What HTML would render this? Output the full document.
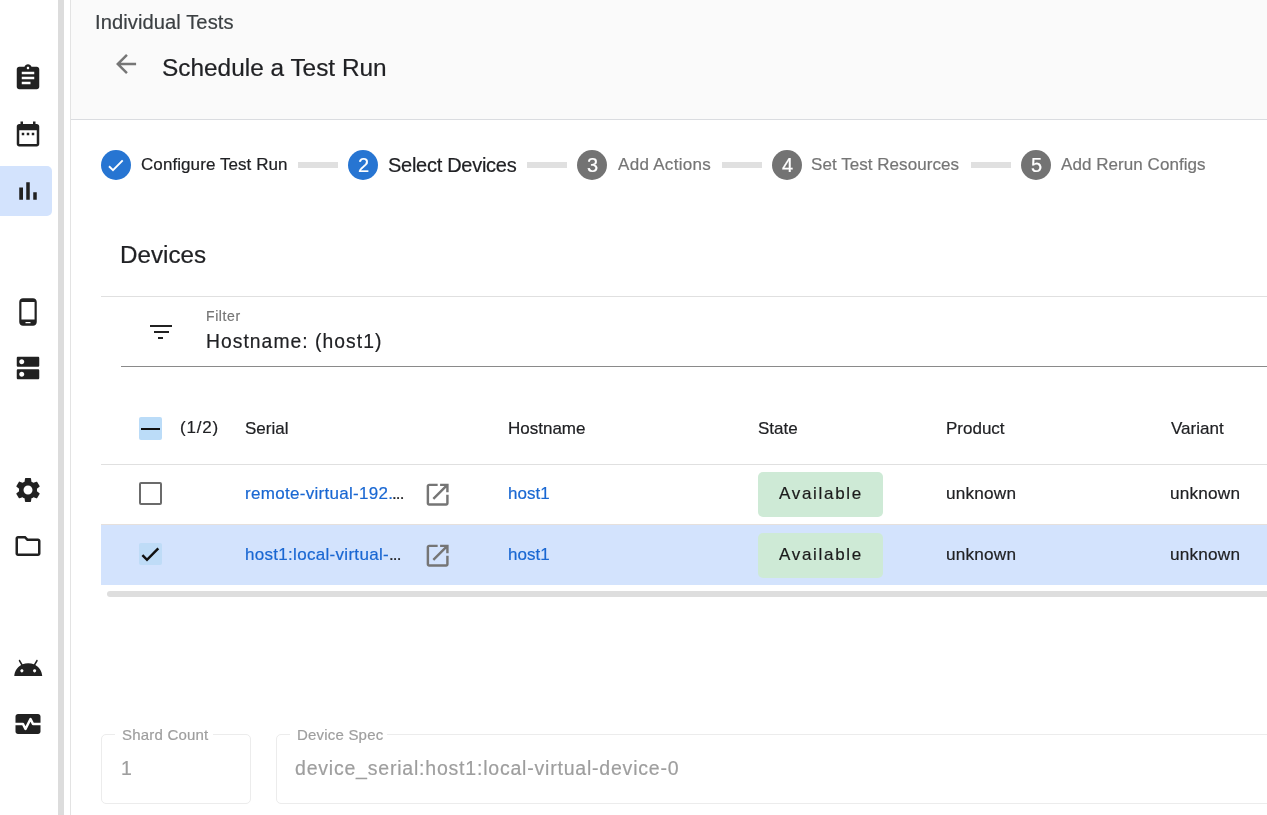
<!DOCTYPE html>
<html><head><meta charset="utf-8">
<style>
html,body{margin:0;padding:0;width:1267px;height:815px;overflow:hidden;background:#fff;font-family:"Liberation Sans",sans-serif;}
.a{position:absolute;}
.t{position:absolute;white-space:nowrap;line-height:1;will-change:transform;-webkit-text-stroke:0.2px currentColor;}
svg{position:absolute;display:block;overflow:visible;}
</style></head>
<body>
<div class="a" style="left:58px;top:0px;width:6px;height:815px;background:#dcdcdc;"></div>
<div class="a" style="left:70px;top:0px;width:1px;height:815px;background:#e3e3e3;"></div>
<div class="a" style="left:0px;top:166px;width:52px;height:50px;background:#d3e3fd;border-radius:0 5px 5px 0"></div>
<svg style="left:13.33px;top:63.3px" width="30" height="30" viewBox="0 0 24 24"><path fill="#212121" d="M19 3h-4.18C14.4 1.84 13.3 1 12 1c-1.3 0-2.4.84-2.82 2H5c-1.1 0-2 .9-2 2v14c0 1.1.9 2 2 2h14c1.1 0 2-.9 2-2V5c0-1.1-.9-2-2-2zm-7 0c.55 0 1 .45 1 1s-.45 1-1 1-1-.45-1-1 .45-1 1-1zm2 14H7v-2h7v2zm3-4H7v-2h10v2zm0-4H7V7h10v2z"/></svg>
<svg style="left:13.0px;top:118.5px" width="30" height="30" viewBox="0 0 24 24"><path fill="#212121" d="M9 11H7v2h2v-2zm4 0h-2v2h2v-2zm4 0h-2v2h2v-2zm2-7h-1V2h-2v2H8V2H6v2H5c-1.11 0-1.99.9-1.99 2L3 20c0 1.1.89 2 2 2h14c1.1 0 2-.9 2-2V6c0-1.1-.9-2-2-2zm0 16H5V9h14v11z"/></svg>
<svg style="left:12.85px;top:175.75px" width="30" height="30" viewBox="0 0 24 24"><path fill="#212121" d="M5 9.2h3V19H5zM10.6 5h2.8v14h-2.8zm5.6 8H19v6h-2.8z"/></svg>
<svg style="left:12.85px;top:297.15px" width="30" height="30" viewBox="0 0 24 24"><path fill="#212121" d="M16 1H8C6.34 1 5 2.34 5 4v16c0 1.66 1.34 3 3 3h8c1.66 0 3-1.34 3-3V4c0-1.66-1.34-3-3-3zm-2 20h-4v-1h4v1zm3.25-3H6.75V4h10.5v14z"/></svg>
<svg style="left:13.25px;top:352.85px" width="30" height="30" viewBox="0 0 24 24"><path fill="#212121" d="M20 13H4c-.55 0-1 .45-1 1v6c0 .55.45 1 1 1h16c.55 0 1-.45 1-1v-6c0-.55-.45-1-1-1zM7 19c-1.1 0-2-.9-2-2s.9-2 2-2 2 .9 2 2-.9 2-2 2zM20 3H4c-.55 0-1 .45-1 1v6c0 .55.45 1 1 1h16c.55 0 1-.45 1-1V4c0-.55-.45-1-1-1zM7 9c-1.1 0-2-.9-2-2s.9-2 2-2 2 .9 2 2-.9 2-2 2z"/></svg>
<svg style="left:12.55px;top:474.9px" width="30" height="30" viewBox="0 0 24 24"><path fill="#212121" d="M19.14 12.94c.04-.3.06-.61.06-.94 0-.32-.02-.64-.07-.94l2.03-1.58c.18-.14.23-.41.12-.61l-1.92-3.32c-.12-.22-.37-.29-.59-.22l-2.39.96c-.5-.38-1.03-.7-1.62-.94l-.36-2.54c-.04-.24-.24-.41-.48-.41h-3.84c-.24 0-.43.17-.47.41l-.36 2.54c-.59.24-1.13.57-1.62.94l-2.39-.96c-.22-.08-.47 0-.59.22L2.74 8.87c-.12.21-.08.47.12.61l2.03 1.58c-.05.3-.09.63-.09.94s.02.64.07.94l-2.03 1.58c-.18.14-.23.41-.12.61l1.92 3.32c.12.22.37.29.59.22l2.39-.96c.5.38 1.03.7 1.62.94l.36 2.54c.05.24.24.41.48.41h3.84c.24 0 .44-.17.47-.41l.36-2.54c.59-.24 1.13-.56 1.62-.94l2.39.96c.22.08.47 0 .59-.22l1.92-3.32c.12-.22.07-.47-.12-.61l-2.01-1.58zM12 15.6c-1.98 0-3.6-1.62-3.6-3.6s1.62-3.6 3.6-3.6 3.6 1.62 3.6 3.6-1.62 3.6-3.6 3.6z"/></svg>
<svg style="left:13.0px;top:531.0px" width="30" height="30" viewBox="0 0 24 24"><path fill="#212121" d="M9.17 6l2 2H20v10H4V6h5.17M10 4H4c-1.1 0-1.99.9-1.99 2L2 18c0 1.1.9 2 2 2h16c1.1 0 2-.9 2-2V8c0-1.1-.9-2-2-2h-8l-2-2z"/></svg>
<svg style="left:12.7px;top:652.5px" width="30.5" height="30.5" viewBox="0 0 24 24"><path fill="#212121" d="M17.6 9.48l1.84-3.18c.16-.31.04-.69-.26-.85-.29-.15-.65-.06-.83.22l-1.88 3.24c-2.86-1.21-6.080-1.21-8.94 0L5.65 5.67c-.19-.29-.58-.38-.87-.2-.28.18-.37.54-.22.83L6.4 9.48C3.3 11.25 1.28 14.44 1 18h22c-.28-3.56-2.3-6.75-5.4-8.520zM7 15.25c-.69 0-1.25-.56-1.25-1.25s.56-1.25 1.25-1.25 1.25.56 1.25 1.25-.56 1.25-1.25 1.25zm10 0c-.69 0-1.25-.56-1.25-1.25s.56-1.25 1.25-1.25 1.25.56 1.25 1.25-.56 1.25-1.25 1.25z"/></svg>
<svg style="left:13.0px;top:709.0px" width="30" height="30" viewBox="0 0 24 24"><path fill="#212121" d="M15.11 12.45L14 10.24l-3.11 6.21c-.16.34-.51.55-.89.55s-.73-.21-.89-.55L7.38 13H2v5c0 1.1.9 2 2 2h16c1.1 0 2-.9 2-2v-5h-6c-.38 0-.73-.21-.89-.55zM20 4H4c-1.1 0-2 .9-2 2v5h6c.38 0 .73.21.89.55L10 13.76l3.11-6.21c.34-.68 1.45-.68 1.79 0L16.62 11H22V6c0-1.1-.9-2-2-2z"/></svg>
<div class="a" style="left:71px;top:0px;width:1196px;height:119px;background:#fafafa;"></div>
<div class="a" style="left:71px;top:119px;width:1196px;height:1px;background:#dadce0;"></div>
<div class="t" style="left:95.40px;top:11.94px;font-size:20.15px;color:#3c4043;letter-spacing:0.08px;">Individual Tests</div>
<svg style="left:110.9px;top:49.1px" width="30.1" height="30.1" viewBox="0 0 24 24"><path fill="#767676" d="M20 11H7.83l5.59-5.59L12 4l-8 8 8 8 1.41-1.41L7.83 13H20v-2z"/></svg>
<div class="t" style="left:161.80px;top:55.65px;font-size:24.4px;color:#202124;">Schedule a Test Run</div>
<div class="a" style="left:101px;top:149.8px;width:30px;height:30px;border-radius:50%;background:#2775d2"></div>
<svg style="left:101px;top:149.8px" width="30" height="30" viewBox="0 0 30 30"><path d="M8 16.2l4 3.9 9.7-9.8" fill="none" stroke="#fff" stroke-width="1.9"/></svg>
<div class="t" style="left:141.20px;top:155.51px;font-size:17px;color:#202124;letter-spacing:0.08px;">Configure Test Run</div>
<div class="a" style="left:298px;top:162px;width:40px;height:6px;background:#e0e0e0;"></div>
<div class="a" style="left:348px;top:149.8px;width:30px;height:30px;border-radius:50%;background:#2775d2"></div>
<div class="t" style="left:357.50px;top:155.07px;font-size:20px;color:#fff;">2</div>
<div class="t" style="left:387.50px;top:155.07px;font-size:20px;color:#202124;letter-spacing:-0.28px;">Select Devices</div>
<div class="a" style="left:527px;top:162px;width:40px;height:6px;background:#e0e0e0;"></div>
<div class="a" style="left:577px;top:149.8px;width:30px;height:30px;border-radius:50%;background:#737373"></div>
<div class="t" style="left:586.50px;top:155.07px;font-size:20px;color:#fff;">3</div>
<div class="t" style="left:617.50px;top:155.51px;font-size:17px;color:#757575;letter-spacing:0.3px;">Add Actions</div>
<div class="a" style="left:722px;top:162px;width:40px;height:6px;background:#e0e0e0;"></div>
<div class="a" style="left:772px;top:149.8px;width:30px;height:30px;border-radius:50%;background:#737373"></div>
<div class="t" style="left:781.50px;top:155.07px;font-size:20px;color:#fff;">4</div>
<div class="t" style="left:811.20px;top:155.51px;font-size:17px;color:#757575;letter-spacing:0.05px;">Set Test Resources</div>
<div class="a" style="left:971px;top:162px;width:40px;height:6px;background:#e0e0e0;"></div>
<div class="a" style="left:1021px;top:149.8px;width:30px;height:30px;border-radius:50%;background:#737373"></div>
<div class="t" style="left:1030.50px;top:155.07px;font-size:20px;color:#fff;">5</div>
<div class="t" style="left:1061.20px;top:155.51px;font-size:17px;color:#757575;letter-spacing:0.06px;">Add Rerun Configs</div>
<div class="t" style="left:119.80px;top:242.71px;font-size:24.2px;color:#202124;">Devices</div>
<div class="a" style="left:101px;top:296px;width:1166px;height:1px;background:#e0e0e0;"></div>
<div class="a" style="left:150px;top:325px;width:22px;height:2px;background:#212121;"></div>
<div class="a" style="left:154px;top:331px;width:14.5px;height:2px;background:#212121;"></div>
<div class="a" style="left:158px;top:337px;width:5px;height:2px;background:#212121;"></div>
<div class="t" style="left:206.10px;top:308.95px;font-size:14px;color:#757575;letter-spacing:0.6px;">Filter</div>
<div class="t" style="left:206.00px;top:332.26px;font-size:19.3px;color:#202124;letter-spacing:1.05px;">Hostname: (host1)</div>
<div class="a" style="left:121px;top:366px;width:1146px;height:1px;background:#8a8a8a;"></div>
<div class="a" style="left:139px;top:417px;width:23px;height:23px;background:#bbdcf8;border-radius:2px"></div>
<div class="a" style="left:141px;top:427.8px;width:19px;height:2.6px;background:#111;"></div>
<div class="t" style="left:180.20px;top:418.61px;font-size:17px;color:#202124;letter-spacing:0.8px;">(1/2)</div>
<div class="t" style="left:244.70px;top:420.41px;font-size:17px;color:#202124;">Serial</div>
<div class="t" style="left:507.80px;top:420.41px;font-size:17px;color:#202124;">Hostname</div>
<div class="t" style="left:757.50px;top:420.41px;font-size:17px;color:#202124;">State</div>
<div class="t" style="left:945.60px;top:420.41px;font-size:17px;color:#202124;">Product</div>
<div class="t" style="left:1170.60px;top:420.41px;font-size:17px;color:#202124;">Variant</div>
<div class="a" style="left:101px;top:464px;width:1166px;height:1px;background:#e0e0e0;"></div>
<div class="a" style="left:101px;top:524px;width:1166px;height:1px;background:#e6e0dc;"></div>
<div class="a" style="left:101px;top:525px;width:1166px;height:60px;background:#d3e3fd;"></div>
<div class="a" style="left:139px;top:482px;width:19px;height:19px;border:2px solid #6b6b6b;border-radius:2px"></div>
<div class="t" style="left:244.80px;top:484.61px;font-size:17px;color:#1967d2;letter-spacing:0.3px;">remote-virtual-192.</div>
<div class="t" style="left:392.10px;top:484.61px;font-size:17px;color:#202124;letter-spacing:-0.9px;">...</div>
<svg style="left:423.3px;top:479.9px" width="29.3" height="29.3" viewBox="0 0 24 24"><path fill="#757575" d="M19 19H5V5h7V3H5c-1.11 0-2 .9-2 2v14c0 1.1.89 2 2 2h14c1.1 0 2-.9 2-2v-7h-2v7zM14 3v2h3.59l-9.83 9.83 1.41 1.41L19 6.41V10h2V3h-7z"/></svg>
<div class="a" style="left:758px;top:472px;width:125px;height:45px;background:#ceead6;border-radius:5px"></div>
<div class="t" style="left:778.60px;top:484.61px;font-size:17px;color:#1b1b1b;letter-spacing:1.7px;">Available</div>
<div class="t" style="left:507.60px;top:484.61px;font-size:17px;color:#1967d2;">host1</div>
<div class="t" style="left:945.60px;top:484.94px;font-size:17.2px;color:#202124;letter-spacing:0.2px;">unknown</div>
<div class="t" style="left:1170.20px;top:484.94px;font-size:17.2px;color:#202124;letter-spacing:0.2px;">unknown</div>
<div class="a" style="left:139px;top:543px;width:23px;height:22px;background:#bfdcf7;border-radius:2px"></div>
<svg style="left:139px;top:543px" width="23" height="22" viewBox="0 0 23 22"><path d="M3.4 12.2l4.6 4.6 11.3-11.4" fill="none" stroke="#111" stroke-width="2.5"/></svg>
<div class="t" style="left:244.80px;top:545.61px;font-size:17px;color:#1967d2;letter-spacing:0.3px;">host1:local-virtual-</div>
<div class="t" style="left:389.10px;top:545.61px;font-size:17px;color:#202124;letter-spacing:-0.9px;">...</div>
<svg style="left:423.3px;top:540.9px" width="29.3" height="29.3" viewBox="0 0 24 24"><path fill="#757575" d="M19 19H5V5h7V3H5c-1.11 0-2 .9-2 2v14c0 1.1.89 2 2 2h14c1.1 0 2-.9 2-2v-7h-2v7zM14 3v2h3.59l-9.83 9.83 1.41 1.41L19 6.41V10h2V3h-7z"/></svg>
<div class="a" style="left:758px;top:533px;width:125px;height:45px;background:#ceead6;border-radius:5px"></div>
<div class="t" style="left:778.60px;top:545.61px;font-size:17px;color:#1b1b1b;letter-spacing:1.7px;">Available</div>
<div class="t" style="left:507.60px;top:545.61px;font-size:17px;color:#1967d2;">host1</div>
<div class="t" style="left:945.60px;top:545.94px;font-size:17.2px;color:#202124;letter-spacing:0.2px;">unknown</div>
<div class="t" style="left:1170.20px;top:545.94px;font-size:17.2px;color:#202124;letter-spacing:0.2px;">unknown</div>
<div class="a" style="left:107px;top:591px;width:1170px;height:6px;background:#dedede;border-radius:3px"></div>
<div class="a" style="left:101px;top:734px;width:148px;height:68px;border:1px solid #ececec;border-radius:5px"></div>
<div class="a" style="left:115px;top:730px;width:98px;height:8px;background:#fff;"></div>
<div class="t" style="left:121.50px;top:727.40px;font-size:15px;color:#9e9e9e;letter-spacing:0.2px;">Shard Count</div>
<div class="t" style="left:121.20px;top:759.49px;font-size:19.5px;color:#9e9e9e;">1</div>
<div class="a" style="left:276px;top:734px;width:1098px;height:68px;border:1px solid #ececec;border-radius:5px"></div>
<div class="a" style="left:290px;top:730px;width:97px;height:8px;background:#fff;"></div>
<div class="t" style="left:296.50px;top:727.40px;font-size:15px;color:#9e9e9e;letter-spacing:0.2px;">Device Spec</div>
<div class="t" style="left:295.00px;top:759.49px;font-size:19.5px;color:#9e9e9e;letter-spacing:0.79px;">device_serial:host1:local-virtual-device-0</div>
</body></html>
